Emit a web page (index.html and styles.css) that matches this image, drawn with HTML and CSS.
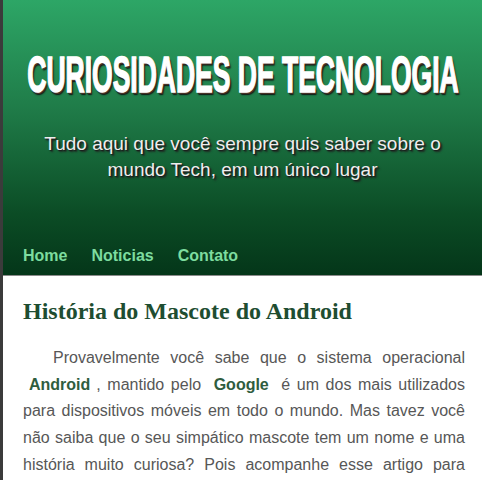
FILE: index.html
```html
<!DOCTYPE html>
<html lang="pt-BR">
<head>
<meta charset="utf-8">
<title>Curiosidades de Tecnologia</title>
<link rel="stylesheet" href="styles.css">
</head>
<body>
<div class="page">
  <header class="site-header">
    <h1 class="site-title"><span class="title-text">CURIOSIDADES DE TECNOLOGIA</span></h1>
    <p class="tagline">Tudo aqui que você sempre quis saber sobre o<br>mundo Tech, em um único lugar</p>
    <nav class="menu">
      <a href="#">Home</a>
      <a href="#">Noticias</a>
      <a href="#">Contato</a>
    </nav>
  </header>
  <main class="content">
    <h2 class="post-title">História do Mascote do Android</h2>
    <p class="post-text">Provavelmente você sabe que o sistema operacional <strong>Android</strong>, mantido pelo <strong>Google</strong> é um dos mais utilizados para dispositivos móveis em todo o mundo. Mas tavez você não saiba que o seu simpático mascote tem um nome e uma história muito curiosa? Pois acompanhe esse artigo para descobrir tudo sobre o pequeno robô verde que conquistou o mundo.</p>
  </main>
</div>
</body>
</html>
```
FILE: styles.css
```css
html, body {
  margin: 0;
  padding: 0;
  background: #ffffff;
}
.page {
  border-left: 3px solid #3b3b3b;
  height: 480px;
  overflow: hidden;
  box-sizing: border-box;
}
.site-header {
  height: 276px;
  box-sizing: border-box;
  border-bottom: 1px solid #8a8a8a;
  background: linear-gradient(to bottom, #2da666 0%, #1f7b48 40%, #0b4c25 78%, #043619 100%);
  display: flex;
  flex-direction: column;
  padding: 50px 20px 0 20px;
}
.site-title {
  margin: 0;
  text-align: center;
  font-family: "Liberation Sans", Arial, sans-serif;
  font-weight: bold;
  font-size: 50px;
  line-height: 50px;
  color: #ffffff;
  text-shadow: 2px 2px 0 #4a3226, 3px 3px 2px #111111;
}
.title-text {
  display: inline-block;
  white-space: nowrap;
  transform: scaleX(0.53);
  transform-origin: center;
  margin: 0 -194px;
  -webkit-text-stroke: 1.6px #ffffff;
}
.tagline {
  margin: 31px 0 0 0;
  text-align: center;
  font-family: "Liberation Sans", Arial, sans-serif;
  font-size: 19px;
  line-height: 26px;
  color: #eeeeee;
  text-shadow: 1px 1px 1px #1b1b1b, 2px 2px 2px #222;
}
.menu {
  margin-top: auto;
  display: flex;
  gap: 24px;
  padding: 0 0 9px 0;
}
.menu a {
  font-family: "Liberation Sans", Arial, sans-serif;
  font-weight: bold;
  font-size: 16px;
  line-height: 20px;
  color: #7ddc9f;
  text-decoration: none;
}
.content {
  padding: 20px 17px 0 20px;
}
.post-title {
  margin: 0;
  font-family: "Liberation Serif", "Times New Roman", serif;
  font-weight: bold;
  font-size: 24px;
  line-height: 30px;
  color: #1e4d31;
}
.post-text {
  margin: 19px 0 0 0;
  font-family: "Liberation Sans", Arial, sans-serif;
  font-size: 16px;
  line-height: 26.7px;
  color: #575757;
  text-align: justify;
  text-indent: 30px;
}
.post-text strong {
  color: #2f5d3e;
  margin: 0 6px;
}
```
